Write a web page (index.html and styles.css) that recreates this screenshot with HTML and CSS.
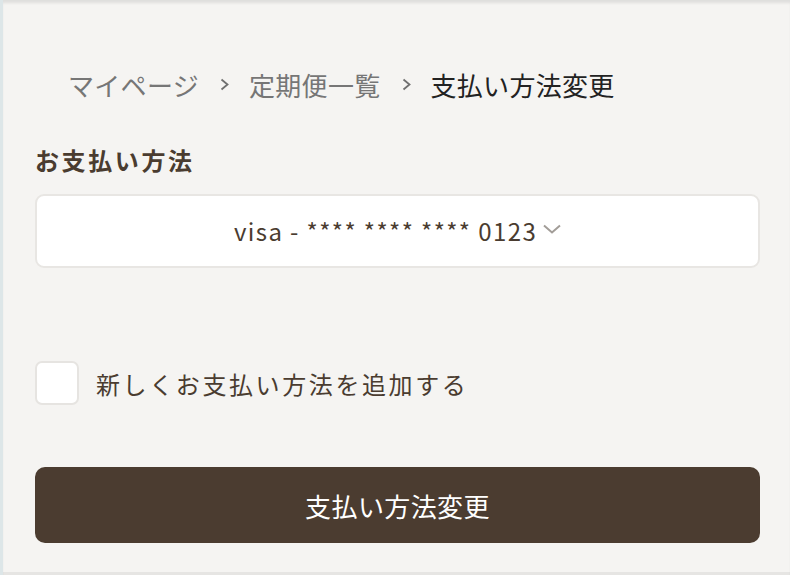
FILE: index.html
```html
<!DOCTYPE html>
<html lang="ja">
<head>
<meta charset="utf-8">
<title>支払い方法変更</title>
<link rel="stylesheet" href="styles.css">
</head>
<body>
<div class="frame">
  <div class="strip"></div>
  <main class="main">
    <nav class="breadcrumb">
      <span class="crumb">マイページ</span>
      <svg class="sep" width="9" height="13" viewBox="0 0 9 13"><path d="M1.5 1.5 L7.5 6.5 L1.5 11.5" fill="none" stroke="#6f6f6f" stroke-width="1.8"/></svg>
      <span class="crumb">定期便一覧</span>
      <svg class="sep" width="9" height="13" viewBox="0 0 9 13"><path d="M1.5 1.5 L7.5 6.5 L1.5 11.5" fill="none" stroke="#6f6f6f" stroke-width="1.8"/></svg>
      <span class="crumb current">支払い方法変更</span>
    </nav>
    <h2 class="label">お支払い方法</h2>
    <div class="select">
      <span class="select-text">visa - **** **** **** 0123</span>
      <svg class="chev" width="18" height="10" viewBox="0 0 18 10"><path d="M1 1.5 L9 8.5 L17 1.5" fill="none" stroke="#a29d98" stroke-width="2"/></svg>
    </div>
    <label class="check-row">
      <span class="checkbox"></span>
      <span class="check-label">新しくお支払い方法を追加する</span>
    </label>
    <button class="submit">支払い方法変更</button>
  </main>
</div>
</body>
</html>
```
FILE: styles.css
```css
html, body {
  margin: 0;
  padding: 0;
  background: #ffffff;
}
body {
  font-family: "Noto Sans CJK JP", "Noto Sans", sans-serif;
}
.frame {
  display: flex;
  height: 575px;
}
.strip {
  width: 3px;
  background: #dde6e8;
}
.main {
  flex: 1;
  background: #f5f4f2;
  box-shadow: inset 0 4px 3px -1px rgba(0,0,0,0.09), inset 0 -3px 0 #e6e5e3;
  padding: 63px 30px 0 32px;
  box-sizing: border-box;
  display: flex;
  flex-direction: column;
}
.breadcrumb {
  display: flex;
  align-items: center;
  padding-left: 33px;
  height: 42px;
  font-size: 26px;
  color: #767676;
  letter-spacing: 0.3px;
}
.sep {
  margin: 0 20px 0 21px;
}
.crumb.current {
  color: #222222;
}
.label {
  margin: 37px 0 16px 0;
  font-size: 24px;
  line-height: 36px;
  font-weight: 700;
  color: #4a3c30;
  letter-spacing: 2.6px;
}
.select {
  height: 74px;
  box-sizing: border-box;
  background: #ffffff;
  border: 2px solid #e8e6e3;
  border-radius: 9px;
  display: flex;
  align-items: center;
  justify-content: center;
  gap: 6px;
  color: #4a3c30;
  font-size: 24px;
}
.select-text {
  line-height: 1;
  letter-spacing: 1.4px;
}
.chev {
  margin-top: -4px;
}
.check-row {
  margin-top: 93px;
  display: flex;
  align-items: center;
  gap: 17px;
}
.checkbox {
  width: 44px;
  height: 44px;
  box-sizing: border-box;
  background: #ffffff;
  border: 2px solid #e6e4e1;
  border-radius: 7px;
}
.check-label {
  font-size: 24px;
  color: #4a3c30;
  letter-spacing: 2.6px;
}
.submit {
  margin-top: 62px;
  height: 76px;
  border: none;
  border-radius: 10px;
  background: #4b3c30;
  color: #ffffff;
  font-family: "Noto Sans CJK JP", "Noto Sans", sans-serif;
  font-size: 26px;
  letter-spacing: 0.4px;
  padding: 0;
}
```
